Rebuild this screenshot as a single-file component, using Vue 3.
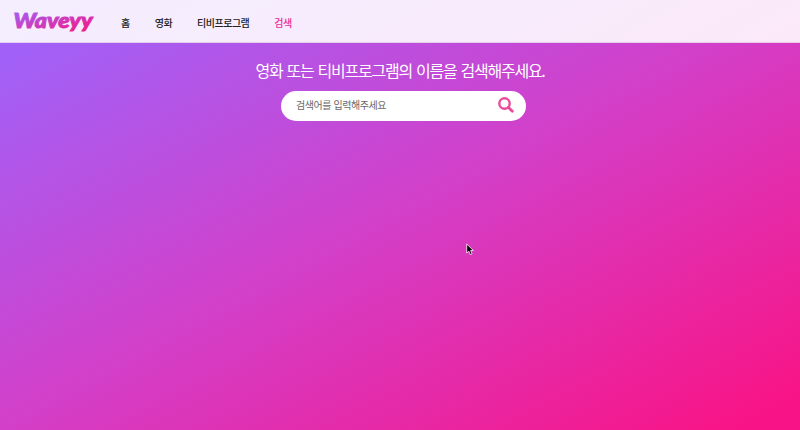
<script setup>
const links = [
  { label: '홈' },
  { label: '영화' },
  { label: '티비프로그램' },
  { label: '검색', active: true },
]
</script>

<template>
  <div class="page">
    <header class="header">
      <svg class="logo" width="82" height="36" viewBox="0 0 82 36" role="img" aria-label="Waveyy">
        <defs>
          <linearGradient id="brand" x1="0" y1="0" x2="1" y2="1">
            <stop offset="0" stop-color="#9966ff" />
            <stop offset="1" stop-color="#fa1482" />
          </linearGradient>
        </defs>
        <text x="-0.5" y="24.5" textLength="79" lengthAdjust="spacingAndGlyphs" fill="url(#brand)" stroke="url(#brand)" stroke-width="0.9">Waveyy</text>
      </svg>
      <nav class="nav">
        <a v-for="link in links" :key="link.label" class="link" :class="{ active: link.active }">{{ link.label }}</a>
      </nav>
    </header>
    <main class="main">
      <h1 class="title">영화 또는 티비프로그램의 이름을 검색해주세요.</h1>
      <form class="search" @submit.prevent>
        <input class="field" type="text" placeholder="검색어를 입력해주세요" />
        <button class="submit" aria-label="검색">
          <svg width="16" height="16" viewBox="0 0 16 16" fill="none" stroke="#ea4c9a">
            <circle cx="6.5" cy="6.5" r="5.2" stroke-width="2.4" />
            <path d="M10.5 10.5 L14.3 14.3" stroke-width="2.8" stroke-linecap="round" />
          </svg>
        </button>
      </form>
    </main>
    <svg class="cursor" width="9" height="13" viewBox="0 0 9 13">
      <path d="M.7 1 V10 L2.8 8.2 L4.3 11.6 L6.1 10.8 L4.6 7.5 H7.4 Z" fill="#050505" stroke="#f6dff0" stroke-width=".9" />
    </svg>
  </div>
</template>

<style>
body {
  margin: 0;
}
</style>

<style scoped>
.page {
  position: relative;
  box-sizing: border-box;
  width: 100%;
  height: 100vh;
  overflow: hidden;
  background: linear-gradient(to bottom right, #9966ff, #d33fc8 50%, #f81486 96%);
  font-family: "Noto Sans CJK KR", sans-serif;
  letter-spacing: -0.5px;
}
.header {
  display: flex;
  align-items: center;
  box-sizing: border-box;
  height: 43px;
  padding-left: 14px;
  border-bottom: 1px solid rgba(170, 120, 190, 0.25);
  background: rgba(255, 255, 255, 0.89);
}
.logo {
  display: block;
  overflow: visible;
  font-family: Lato, sans-serif;
  font-size: 20px;
  font-weight: 900;
  font-style: italic;
  letter-spacing: 0;
}
.nav {
  display: flex;
  gap: 25px;
  margin-left: 25px;
  padding-top: 3px;
}
.link {
  color: #222;
  font-size: 10px;
  font-weight: 500;
  line-height: 16px;
}
.link.active {
  color: #ec2d98;
}
.main {
  display: flex;
  flex-direction: column;
  align-items: center;
  padding-top: 15px;
}
.title {
  margin: 0;
  color: #fff;
  font-size: 16px;
  font-weight: 400;
  line-height: 24px;
  letter-spacing: -1.25px;
  word-spacing: 1.8px;
}
.search {
  display: flex;
  align-items: center;
  box-sizing: border-box;
  width: 245px;
  height: 30px;
  margin: 9px 0 0 7px;
  padding: 0 12px 0 15px;
  border-radius: 15px;
  background: #fff;
}
.field {
  flex: 1;
  min-width: 0;
  padding: 0 0 3px;
  border: 0;
  outline: 0;
  background: none;
  font: inherit;
  font-size: 10px;
  letter-spacing: -0.45px;
  word-spacing: 0.8px;
}
.field::placeholder {
  color: #6b6868;
}
.submit {
  display: flex;
  padding: 0;
  border: 0;
  background: none;
}
.submit svg {
  margin-top: -2px;
}
.cursor {
  position: absolute;
  left: 466px;
  top: 243px;
}
</style>
